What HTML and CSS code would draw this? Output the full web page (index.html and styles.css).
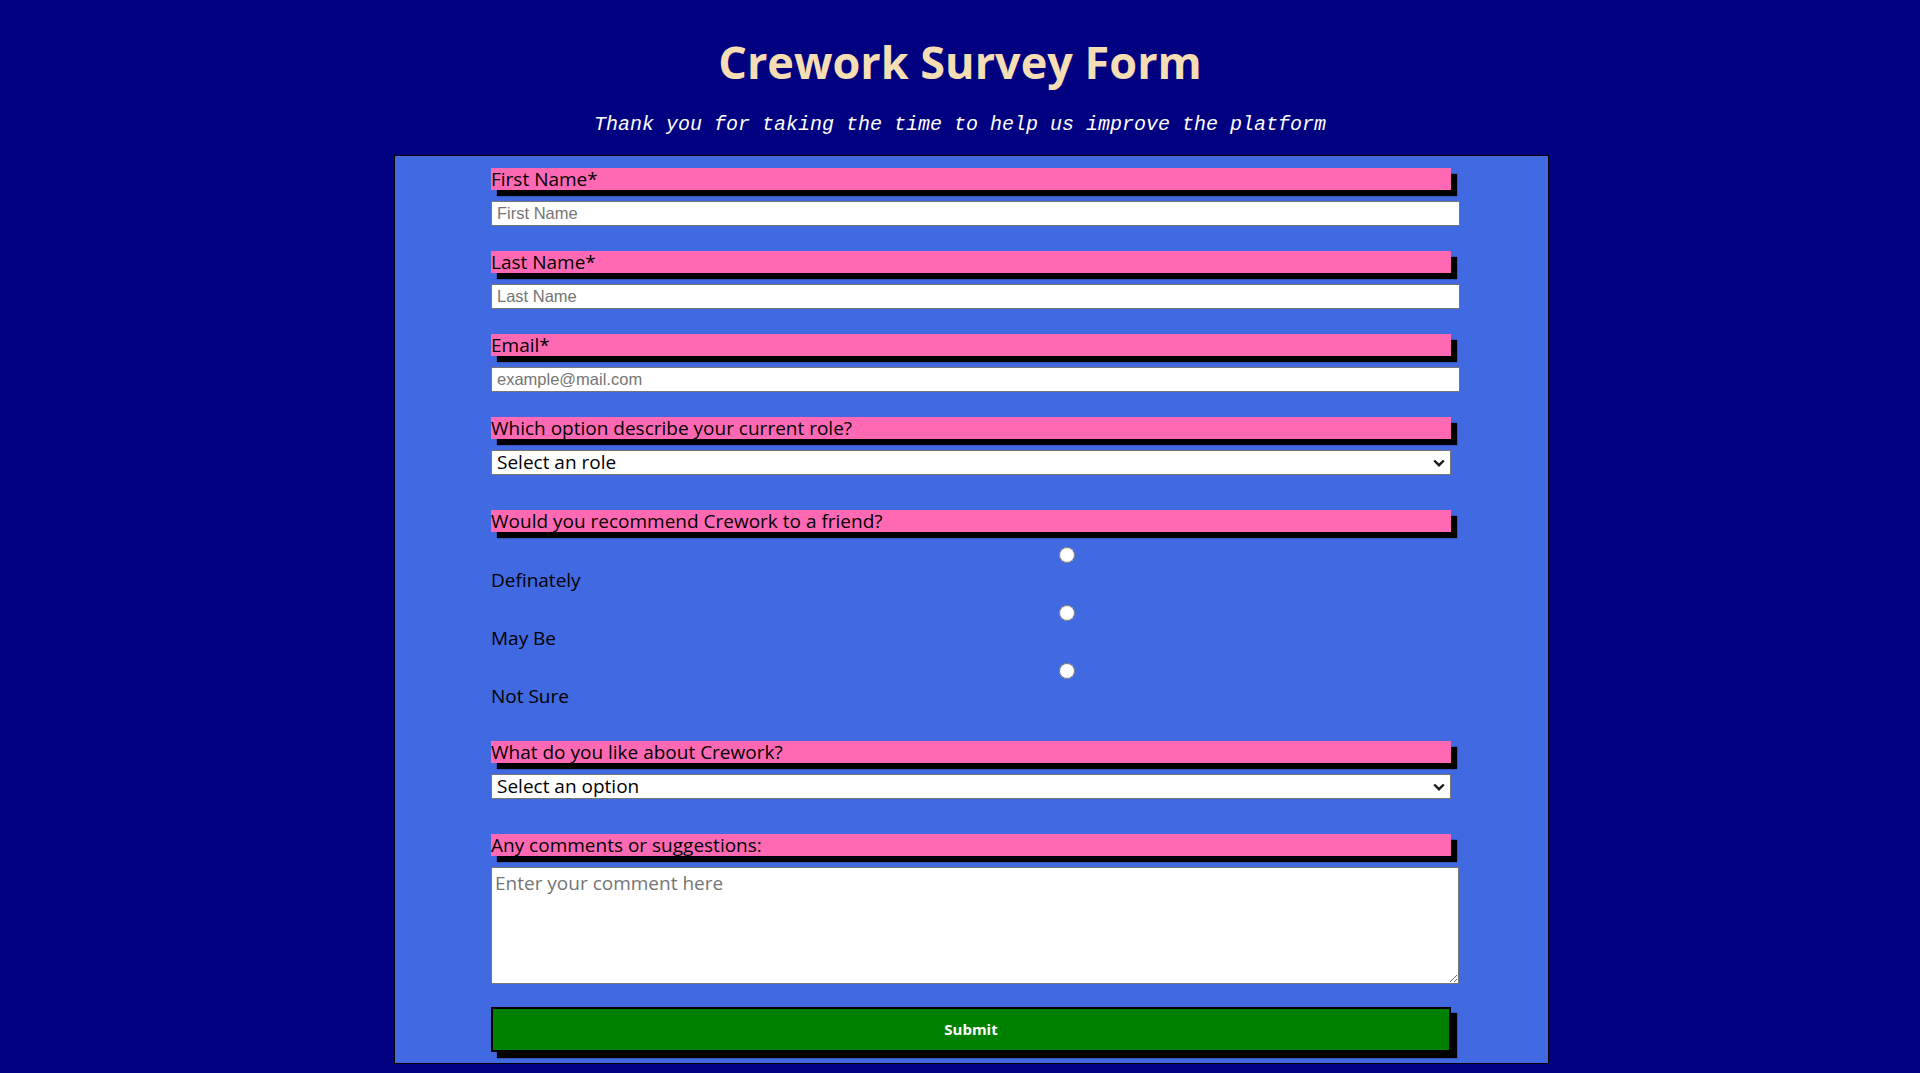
FILE: index.html
```html
<!DOCTYPE html>
<html lang="en">
<head>
<meta charset="utf-8">
<title>Crework Survey Form</title>
<link rel="stylesheet" href="styles.css">
</head>
<body>
<header class="page-header">
  <h1 class="title">Crework Survey Form</h1>
  <p class="subtitle">Thank you for taking the time to help us improve the platform</p>
</header>
<form class="survey">
  <div class="field">
    <label class="field-label" for="first-name">First Name*</label>
    <input class="text-input" id="first-name" type="text" placeholder="First Name">
  </div>
  <div class="field">
    <label class="field-label" for="last-name">Last Name*</label>
    <input class="text-input" id="last-name" type="text" placeholder="Last Name">
  </div>
  <div class="field">
    <label class="field-label" for="email">Email*</label>
    <input class="text-input" id="email" type="email" placeholder="example@mail.com">
  </div>
  <div class="field field-select">
    <label class="field-label" for="role">Which option describe your current role?</label>
    <div class="select-wrap">
      <select class="select" id="role">
        <option>Select an role</option>
        <option>Student</option>
        <option>Full Time Job</option>
      </select>
      <svg class="chevron" width="12" height="8" viewBox="0 0 12 8" aria-hidden="true"><path d="M1.2 1.5 L6 6.2 L10.8 1.5" fill="none" stroke="#1a1a1a" stroke-width="2.4"/></svg>
    </div>
  </div>
  <div class="field field-radio">
    <div class="field-label radio-title">Would you recommend Crework to a friend?</div>
    <div class="options">
      <label class="option"><input class="radio" type="radio" name="recommend"><span class="option-text">Definately</span></label>
      <label class="option"><input class="radio" type="radio" name="recommend"><span class="option-text">May Be</span></label>
      <label class="option"><input class="radio" type="radio" name="recommend"><span class="option-text">Not Sure</span></label>
    </div>
  </div>
  <div class="field field-select">
    <label class="field-label" for="like">What do you like about Crework?</label>
    <div class="select-wrap">
      <select class="select" id="like">
        <option>Select an option</option>
        <option>Community</option>
        <option>Projects</option>
      </select>
      <svg class="chevron" width="12" height="8" viewBox="0 0 12 8" aria-hidden="true"><path d="M1.2 1.5 L6 6.2 L10.8 1.5" fill="none" stroke="#1a1a1a" stroke-width="2.4"/></svg>
    </div>
  </div>
  <div class="field field-comment">
    <label class="field-label" for="comment">Any comments or suggestions:</label>
    <textarea class="comment" id="comment" placeholder="Enter your comment here"></textarea>
  </div>
  <button class="submit" type="submit">Submit</button>
</form>
</body>
</html>
```
FILE: styles.css
```css
html, body {
  margin: 0;
  padding: 0;
}

body {
  background: #000080;
  font-family: "Open Sans", "Liberation Sans", sans-serif;
  color: #000;
}

.page-header {
  padding-top: 35px;
  text-align: center;
}

.title {
  margin: 0;
  font-size: 45px;
  line-height: 54px;
  font-weight: 700;
  color: #f5deb3;
}

.subtitle {
  margin: 24px 0 18px;
  font-family: "Liberation Mono", "Courier New", monospace;
  font-style: italic;
  font-size: 20px;
  line-height: 24px;
  color: #ffffff;
}

.survey {
  box-sizing: border-box;
  width: 1155px;
  margin-left: 394px;
  border: 1px solid #000;
  background: #4169e1;
  padding: 12px 0 11px 96px;
}

.field {
  width: 960px;
  margin-bottom: 25.5px;
}

.field-label {
  display: block;
  height: 22px;
  line-height: 22px;
  font-size: 19px;
  background: #ff69b4;
  color: #000;
  box-shadow: 6px 6px 1px #000;
  margin-bottom: 10.5px;
}

.text-input {
  display: block;
  box-sizing: border-box;
  width: 969px;
  height: 25px;
  margin: 0;
  border: 1px solid #767676;
  padding: 0 5px;
  font-family: "Liberation Sans", Arial, sans-serif;
  font-size: 16.5px;
  background: #fff;
  color: #000;
}

.text-input::placeholder {
  color: #757575;
}

.field-select {
  margin-bottom: 35.5px;
}

.select-wrap {
  position: relative;
  width: 960px;
}

.select {
  display: block;
  box-sizing: border-box;
  width: 960px;
  height: 25px;
  margin: 0;
  border: 1px solid #767676;
  border-radius: 0;
  padding: 0 24px 0 5px;
  -webkit-appearance: none;
  appearance: none;
  font-family: "Open Sans", "Liberation Sans", sans-serif;
  font-size: 19px;
  line-height: 23px;
  background: #fff;
  color: #000;
}

.chevron {
  position: absolute;
  right: 6px;
  top: 9px;
  pointer-events: none;
}

.field-radio {
  margin-bottom: 34px;
}

.radio-title {
  margin-bottom: 15px;
}

.options {
  display: flex;
  flex-direction: column;
  gap: 14px;
}

.option {
  display: flex;
  flex-direction: column;
  gap: 6px;
}

.radio {
  width: 16px;
  height: 16px;
  margin: 0 0 0 568px;
}

.option-text {
  font-size: 19px;
  line-height: 22px;
}

.field-comment {
  margin-bottom: 23px;
}

.comment {
  display: block;
  box-sizing: border-box;
  width: 968px;
  height: 117px;
  margin: 0;
  border: 1px solid #767676;
  padding: 2px 3px;
  font-family: "Open Sans", "Liberation Sans", sans-serif;
  font-size: 19px;
  background: #fff;
}

.comment::placeholder {
  color: #757575;
}

.submit {
  display: block;
  box-sizing: border-box;
  width: 960px;
  height: 45px;
  margin: 0;
  border: 2px solid #000;
  background: #008000;
  color: #fff;
  font-family: "Open Sans", "Liberation Sans", sans-serif;
  font-size: 15px;
  font-weight: 700;
  box-shadow: 6px 6px 1px #000;
  cursor: pointer;
}
```
